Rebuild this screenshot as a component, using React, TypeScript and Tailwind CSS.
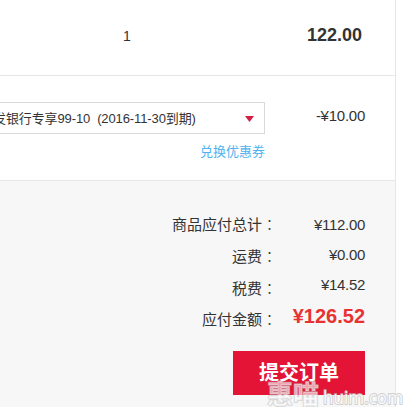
import React from 'react'

const totals = [
  { label: '商品应付总计', value: '¥112.00', valueClass: 'mt-px' },
  { label: '运费', value: '¥0.00', valueClass: '-mt-px' },
  { label: '税费', value: '¥14.52', valueClass: '-mt-[3px]' },
]

const Colon = () => <span className="font-['Noto_Sans_CJK_TC',sans-serif] font-light">：</span>

const ProductRow = () => (
  <div className="flex h-[76px] border-b border-[#e6e6e6]">
    <div className="w-[254px] pt-[26px] text-center text-sm">1</div>
    <div className="grow pt-[23px] pr-[33px] text-right text-lg leading-6 font-bold">122.00</div>
  </div>
)

const CouponRow = () => (
  <div className="flex h-[105px] border-b border-[#e6e6e6] pt-[26px]">
    <div className="w-[265px]">
      <button className="flex h-8 w-full items-center border border-l-0 border-[#d9d9d9] bg-white pt-px text-[13px] whitespace-pre">
        <span className="-ml-[7px] tracking-[-0.11px]">发银行专享99-10  (2016-11-30到期)</span>
        <svg className="mr-2.5 ml-auto h-[6px] w-[9px]" viewBox="0 0 9 6">
          <path d="M0 0h9L4.5 6z" fill="#d31f45" />
        </svg>
      </button>
      <a className="mt-2 block text-right text-[13px] leading-5 text-[#4fb3ee]">兑换优惠券</a>
    </div>
    <div className="grow pt-1 pr-[30px] text-right text-[15px] leading-5 tracking-[-0.25px]">-¥10.00</div>
  </div>
)

const Summary = () => (
  <div className="h-[226px] bg-[#f7f7f7] pt-[33px] pr-[30px]">
    {totals.map((row) => (
      <div key={row.label} className="flex h-8 justify-end text-[15px] leading-5">
        <span className="whitespace-nowrap">
          {row.label}
          <Colon />
        </span>
        <span className="w-[88px] text-right tracking-[-0.3px]">
          <span className={`block ${row.valueClass}`}>{row.value}</span>
        </span>
      </div>
    ))}
    <div className="flex h-[41px] justify-end text-[15px] leading-5">
      <span className="-mt-px whitespace-nowrap">
        应付金额
        <Colon />
      </span>
      <span className="-mt-1.5 w-[88px] text-right text-xl leading-6 font-bold whitespace-nowrap text-[#e83232]">
        ¥126.52
      </span>
    </div>
    <button className="ml-auto flex h-11 w-[132px] items-center justify-center bg-[#e31436] text-xl font-bold text-white">
      提交订单
    </button>
  </div>
)

const Watermark = () => (
  <svg className="absolute bottom-0 left-[264px]" width="141" height="30" viewBox="0 0 141 30">
    <g fill="#ffffff" stroke="#bdbdbd" strokeLinejoin="round" paintOrder="stroke">
      <text
        x="3"
        y="27"
        fontSize="26"
        fontWeight="bold"
        fillOpacity="0.6"
        strokeOpacity="0.6"
        strokeWidth="1.5"
        fontFamily="Noto Sans CJK SC, sans-serif"
      >
        惠喵
      </text>
      <text
        x="59"
        y="27"
        fontSize="19"
        textLength="80"
        lengthAdjust="spacingAndGlyphs"
        fillOpacity="0.9"
        strokeOpacity="0.7"
        strokeWidth="2"
        fontFamily="Open Sans, sans-serif"
      >
        huim.com
      </text>
    </g>
  </svg>
)

const App = () => {
  return (
    <div className="relative h-[407px] w-[405px] overflow-hidden bg-white font-['Liberation_Sans','Noto_Sans_CJK_SC',sans-serif] text-[#333]">
      <div className="w-[396px] border-r border-[#e6e6e6]">
        <ProductRow />
        <CouponRow />
        <Summary />
      </div>
      <Watermark />
    </div>
  )
}

export default App
